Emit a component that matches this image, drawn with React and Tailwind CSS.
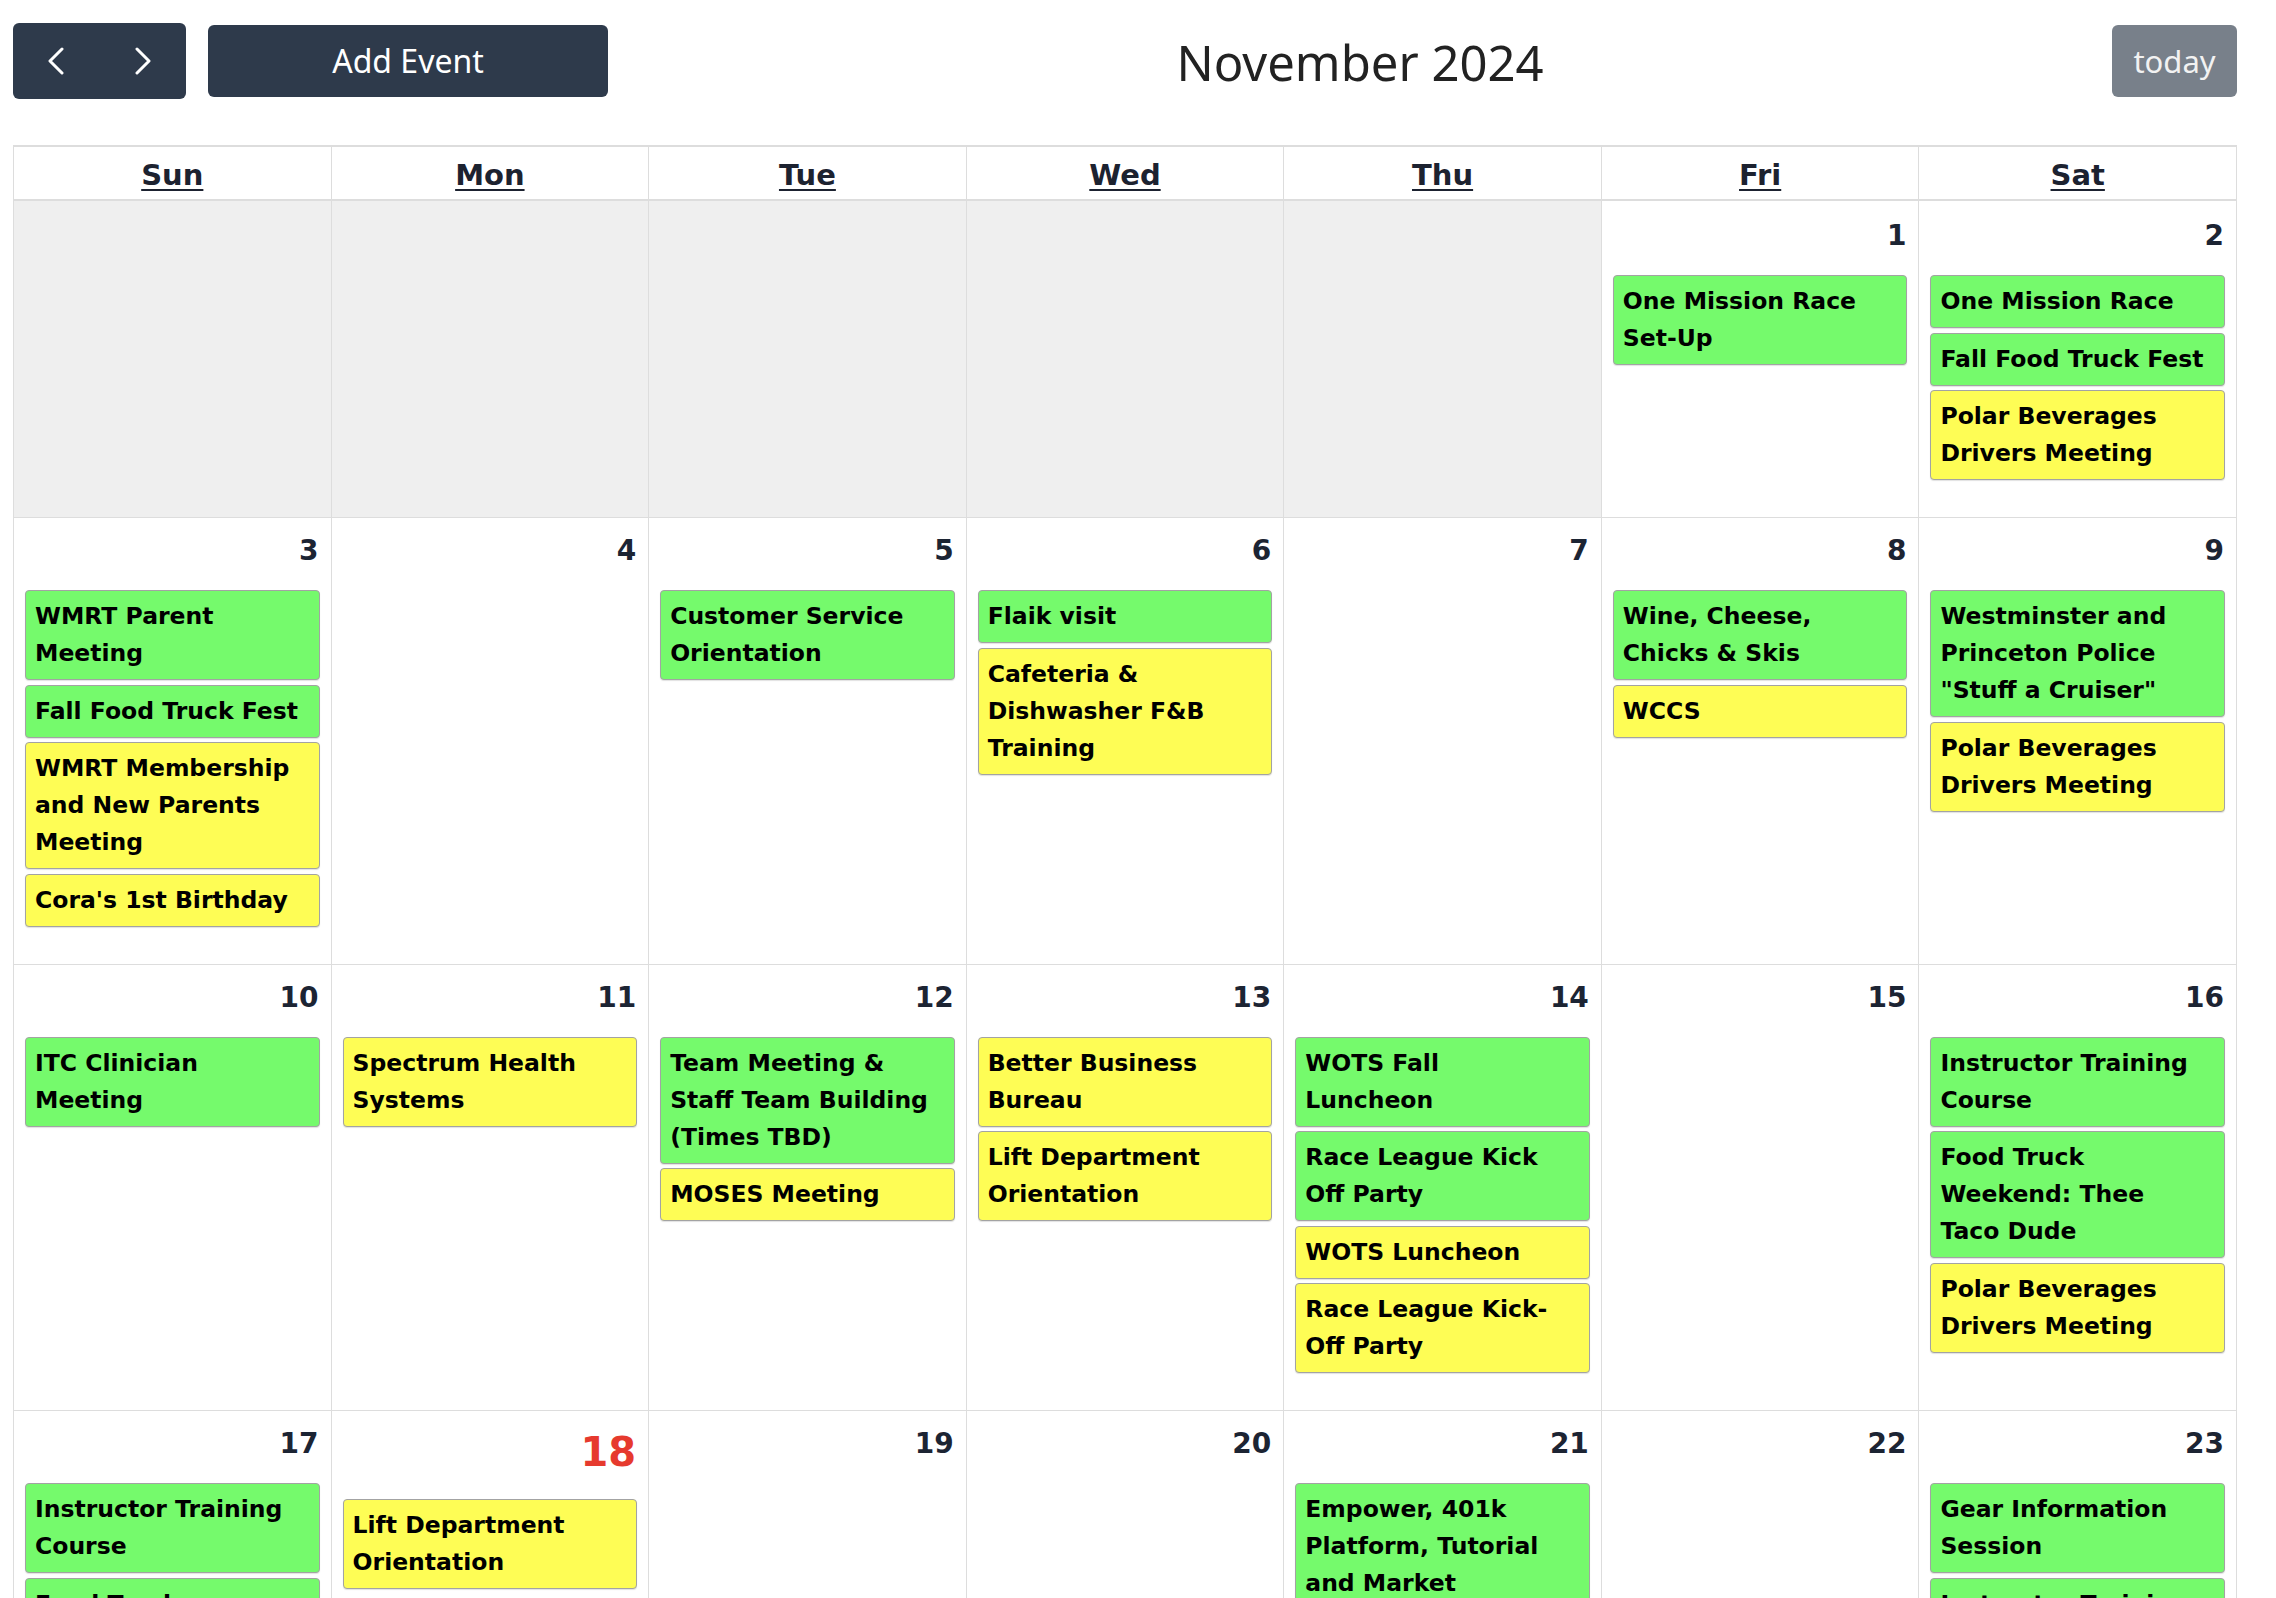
import { useState } from 'react';

const G = 'g';
const Y = 'y';

const weekdays = ['Sun', 'Mon', 'Tue', 'Wed', 'Thu', 'Fri', 'Sat'];

// 11월 달력 데이터 (앞쪽 5칸은 지난달)
const weeks = [
  [
    { other: true }, { other: true }, { other: true }, { other: true }, { other: true },
    { day: 1, events: [['One Mission Race Set-Up', G]] },
    { day: 2, events: [['One Mission Race', G], ['Fall Food Truck Fest', G], ['Polar Beverages Drivers Meeting', Y]] },
  ],
  [
    { day: 3, events: [['WMRT Parent Meeting', G], ['Fall Food Truck Fest', G], ['WMRT Membership and New Parents Meeting', Y], ["Cora's 1st Birthday", Y]] },
    { day: 4, events: [] },
    { day: 5, events: [['Customer Service Orientation', G]] },
    { day: 6, events: [['Flaik visit', G], ['Cafeteria & Dishwasher F&B Training', Y]] },
    { day: 7, events: [] },
    { day: 8, events: [['Wine, Cheese, Chicks & Skis', G], ['WCCS', Y]] },
    { day: 9, events: [['Westminster and Princeton Police "Stuff a Cruiser"', G], ['Polar Beverages Drivers Meeting', Y]] },
  ],
  [
    { day: 10, events: [['ITC Clinician Meeting', G]] },
    { day: 11, events: [['Spectrum Health Systems', Y]] },
    { day: 12, events: [['Team Meeting & Staff Team Building (Times TBD)', G], ['MOSES Meeting', Y]] },
    { day: 13, events: [['Better Business Bureau', Y], ['Lift Department Orientation', Y]] },
    { day: 14, events: [['WOTS Fall Luncheon', G], ['Race League Kick Off Party', G], ['WOTS Luncheon', Y], ['Race League Kick-Off Party', Y]] },
    { day: 15, events: [] },
    { day: 16, events: [['Instructor Training Course', G], ['Food Truck Weekend: Thee Taco Dude', G], ['Polar Beverages Drivers Meeting', Y]] },
  ],
  [
    { day: 17, events: [['Instructor Training Course', G], ['Food Truck Weekend: Thee Taco Dude', G]] },
    { day: 18, today: true, events: [['Lift Department Orientation', Y]] },
    { day: 19, events: [] },
    { day: 20, events: [] },
    { day: 21, events: [['Empower, 401k Platform, Tutorial and Market Overview', G]] },
    { day: 22, events: [] },
    { day: 23, events: [['Gear Information Session', G], ['Instructor Training Course', G]] },
  ],
];

const Chevron = ({ dir }) => (
  <svg width="18" height="28" viewBox="0 0 18 28" fill="none" stroke="white" strokeWidth={3} strokeLinecap="round" strokeLinejoin="round">
    {dir === 'left' ? <polyline points="15,2 3,14 15,26" /> : <polyline points="3,2 15,14 3,26" />}
  </svg>
);

const EventBox = ({ title, color }) => (
  <div
    className={`rounded-[4px] border border-[#a3a3a3] py-[7px] pl-[9px] pr-[17px] text-[23.5px] font-bold leading-[37px] text-black shadow-[0_1px_1px_rgba(0,0,0,0.12)] ${
      color === G ? 'bg-[#75fa6c]' : 'bg-[#fefd55]'
    }`}
  >
    {title}
  </div>
);

const DayCell = ({ cell, first }) => {
  if (cell.other) {
    return <div className="border-b border-r border-[#dddddd] bg-[#efefef]" />;
  }
  return (
    <div className={`border-b border-r border-[#dddddd] pb-[37px] ${first ? 'pt-[17px]' : 'pt-[15px]'}`}>
      {cell.today ? (
        <div className="pr-[12px] pt-[1px] text-right text-[40px] font-bold leading-[50px] text-[#e63a2e]">{cell.day}</div>
      ) : (
        <div className="pr-[12px] text-right text-[28px] font-bold leading-[35px] text-[#1c2433]">{cell.day}</div>
      )}
      <div className="mt-[22px] flex flex-col gap-[4.5px] px-[11px]">
        {cell.events.map(([title, color], i) => (
          <EventBox key={i} title={title} color={color} />
        ))}
      </div>
    </div>
  );
};

const App = () => {
  const [month] = useState('November 2024');

  return (
    <div className="min-h-screen bg-white px-[13px] pt-[25px]" style={{ fontFamily: '"DejaVu Sans", Verdana, sans-serif' }}>
      {/* 상단 툴바 */}
      <div className="flex h-[72px] w-[2224px] items-center">
        <div className="flex h-[76px] w-[173px] rounded-[6px] bg-[#2e3a4b]">
          <button className="flex flex-1 items-center justify-center">
            <Chevron dir="left" />
          </button>
          <button className="flex flex-1 items-center justify-center">
            <Chevron dir="right" />
          </button>
        </div>
        <button
          className="ml-[22px] flex h-[72px] w-[400px] items-center justify-center rounded-[6px] bg-[#2e3a4b] text-[32px] text-white"
          style={{ fontFamily: '"Noto Sans", "Open Sans", sans-serif' }}
        >
          Add Event
        </button>
        <div
          className="flex-1 pt-[3px] text-center text-[49px] text-[#222222]"
          style={{ fontFamily: '"Noto Sans", "Open Sans", sans-serif' }}
        >
          {month}
        </div>
        <button
          className="flex h-[72px] w-[125px] items-center justify-center rounded-[6px] bg-[#78808a] text-[31px] text-[#f2f2f2]"
          style={{ fontFamily: '"Noto Sans", "Open Sans", sans-serif' }}
        >
          today
        </button>
      </div>

      {/* 달력 */}
      <div className="mt-[48px] grid w-[2224px] grid-cols-7 border-l border-t-2 border-[#dddddd]">
        {weekdays.map((d) => (
          <div key={d} className="flex h-[54px] items-center justify-center border-b-2 border-r border-[#dddddd] pt-[6px]">
            <span className="text-[29px] font-bold text-[#1c2230] underline underline-offset-[4px]">{d}</span>
          </div>
        ))}
        {weeks.map((week, wi) =>
          week.map((cell, ci) => <DayCell key={`${wi}-${ci}`} cell={cell} first={wi === 0} />)
        )}
      </div>
    </div>
  );
};

export default App;
